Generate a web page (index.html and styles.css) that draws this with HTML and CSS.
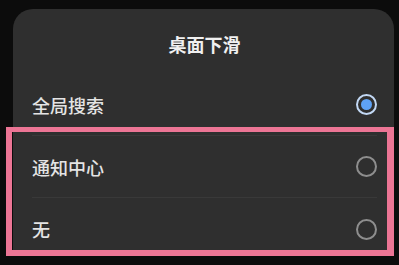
FILE: index.html
```html
<!DOCTYPE html>
<html lang="zh-CN">
<head>
<meta charset="utf-8">
<link rel="stylesheet" href="styles.css">
</head>
<body>
<div class="screen">
  <div class="sheet">
    <div class="title">桌面下滑</div>
    <div class="row">
      <span class="label">全局搜索</span>
      <span class="radio checked"><span class="dot"></span></span>
    </div>
    <div class="row">
      <span class="label">通知中心</span>
      <span class="radio"></span>
    </div>
    <div class="row last">
      <span class="label">无</span>
      <span class="radio"></span>
    </div>
  </div>
  <div class="highlight"></div>
</div>
</body>
</html>
```
FILE: styles.css
```css
html, body {
  margin: 0;
  padding: 0;
  background: #0c0c0c;
}
.screen {
  position: relative;
  width: 399px;
  height: 265px;
  overflow: hidden;
  padding: 9px 5px 0 13px;
  box-sizing: border-box;
  font-family: "Noto Sans CJK SC", "Noto Sans", sans-serif;
  color: #e4e4e4;
}
.sheet {
  background: #2f2f2f;
  border-radius: 20px 20px 0 0;
  height: 245px;
  padding: 0 17px 0 19px;
}
.title {
  height: 65px;
  box-sizing: border-box;
  padding-top: 24px;
  line-height: 22px;
  text-align: center;
  font-size: 18px;
  font-weight: bold;
  color: #f0f0f0;
}
.row {
  height: 62px;
  display: flex;
  align-items: center;
  justify-content: space-between;
  border-bottom: 1px solid #393939;
  box-sizing: border-box;
}
.row.last {
  border-bottom: none;
}
.label {
  font-size: 18px;
  line-height: 22px;
  font-weight: 500;
}
.radio {
  width: 21px;
  height: 21px;
  box-sizing: border-box;
  border: 2px solid #8e8e8e;
  border-radius: 50%;
  display: flex;
  align-items: center;
  justify-content: center;
}
.radio.checked {
  border: 2px solid #c2d8f4;
}
.radio .dot {
  width: 11px;
  height: 11px;
  border-radius: 50%;
  background: #5ea2f6;
}
.highlight {
  position: absolute;
  left: 6px;
  top: 127px;
  width: 388px;
  height: 129px;
  box-sizing: border-box;
  border-style: solid;
  border-color: #ec7595;
  border-width: 5px 7px 6px 6px;
}
```
